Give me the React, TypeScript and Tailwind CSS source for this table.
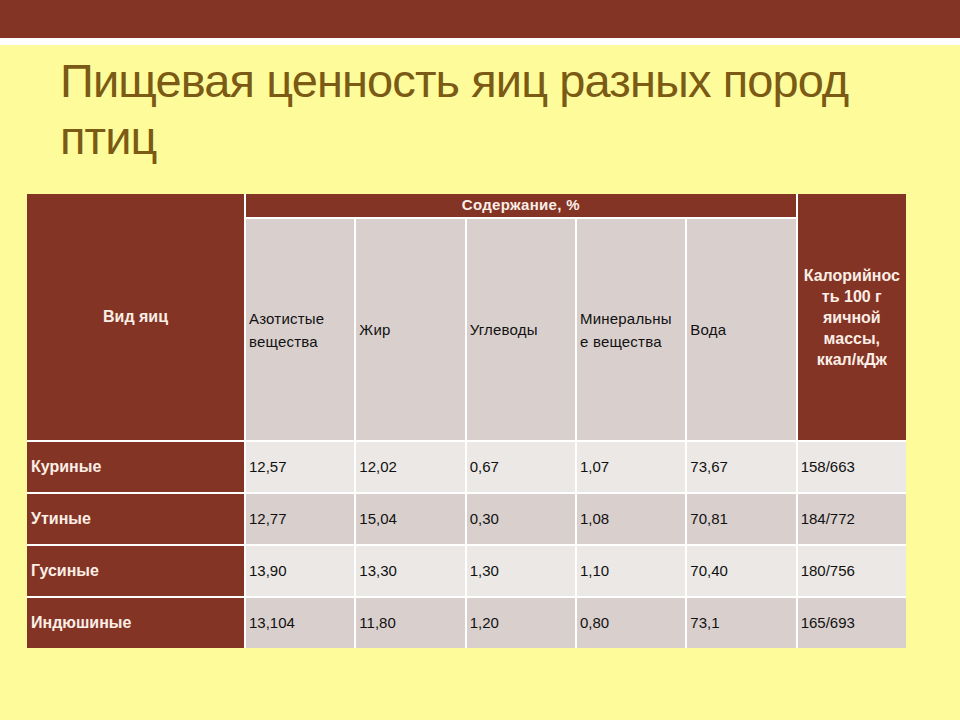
const rows = [
  { name: 'Куриные', values: ['12,57', '12,02', '0,67', '1,07', '73,67', '158/663'] },
  { name: 'Утиные', values: ['12,77', '15,04', '0,30', '1,08', '70,81', '184/772'] },
  { name: 'Гусиные', values: ['13,90', '13,30', '1,30', '1,10', '70,40', '180/756'] },
  { name: 'Индюшиные', values: ['13,104', '11,80', '1,20', '0,80', '73,1', '165/693'] },
]

const subHeaders = [
  <>Азотистые<br />вещества</>,
  <>Жир</>,
  <>Углеводы</>,
  <>Минеральны<br />е вещества</>,
  <>Вода</>,
]

export default function App() {
  return (
    <div className="w-[960px] h-[720px] bg-[#fefc9a] font-['Liberation_Sans',Arial,sans-serif] overflow-hidden">
      <div className="h-[38px] bg-[#843424]" />
      <div className="h-[7px] bg-white" />

      <h1 className="pl-[60px] pt-[7px] w-[870px] text-[47px] leading-[57px] tracking-[-0.9px] text-[#7a5a14]">
        Пищевая ценность яиц разных пород птиц
      </h1>

      <div className="ml-[27px] mt-[28px] w-[879px] grid grid-cols-[217px_repeat(6,1fr)] grid-rows-[23px_221px_repeat(4,50px)] gap-[2px] bg-white text-[15px]">
        {/* header */}
        <div className="row-span-2 bg-[#843424] flex items-center justify-center font-bold text-[16px] text-[#fbeee6]">
          Вид яиц
        </div>
        <div className="col-span-5 bg-[#843424] flex items-center justify-center font-bold text-[15px] tracking-[0.3px] text-[#fbeee6]">
          Содержание, %
        </div>
        <div className="row-span-2 bg-[#843424] flex items-center justify-center text-center font-bold text-[16px] leading-[21px] text-[#fbeee6]">
          <span>
            Калорийнос<br />ть 100 г<br />яичной<br />массы,<br />ккал/кДж
          </span>
        </div>
        {subHeaders.map((h, i) => (
          <div key={i} className="bg-[#d9d0ce] flex items-center pl-[3px] leading-[23px] tracking-[0.2px] text-[#111]">
            <span>{h}</span>
          </div>
        ))}

        {/* body */}
        {rows.map((r, i) => (
          <Row key={r.name} name={r.name} values={r.values} light={i % 2 === 0} />
        ))}
      </div>
    </div>
  )
}

function Row({ name, values, light }: { name: string; values: string[]; light: boolean }) {
  return (
    <>
      <div className="bg-[#843424] flex items-center pl-[4px] font-bold text-[16px] text-[#fbeee6]">{name}</div>
      {values.map((v, j) => (
        <div
          key={j}
          className={`${light ? 'bg-[#ebe8e5]' : 'bg-[#d9d0ce]'} flex items-center pl-[3px] text-[#111]`}
        >
          {v}
        </div>
      ))}
    </>
  )
}
